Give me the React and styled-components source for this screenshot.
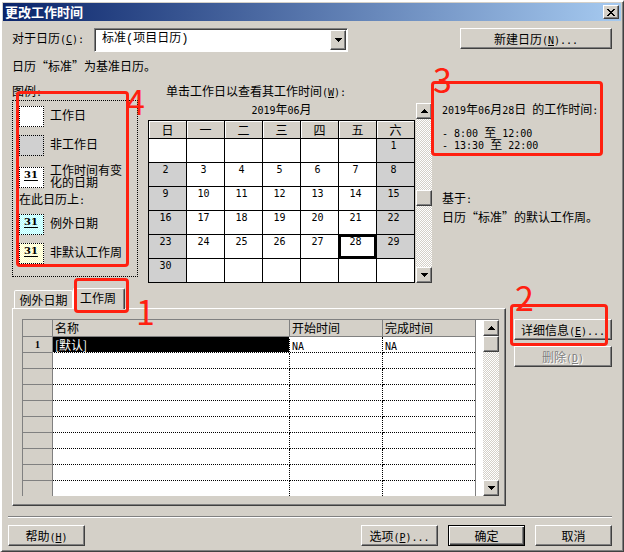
import React, { useState } from "react";
import styled, { createGlobalStyle, css } from "styled-components";

const FACE = "#d4d0c8";
const SHADE = "#808080";
const DARK = "#404040";
const RED = "#ff2010";
const CJK = '"Noto Sans CJK SC", sans-serif';

const Global = createGlobalStyle`
  *, *::before, *::after { box-sizing: border-box; }
  body { margin: 0; background: ${FACE}; }
  body, button, select, table {
    font-family: ${CJK};
    font-size: 12px;
    line-height: 16px;
    color: #000;
  }
  button { margin: 0; padding: 0; border: 0; border-radius: 0; }
  p { margin: 0; }
`;

const raised = css`
  background: ${FACE};
  border: 1px solid;
  border-color: #fff ${DARK} ${DARK} #fff;
  box-shadow: inset -1px -1px 0 ${SHADE};
`;

const Dialog = styled.main`
  min-height: 100vh;
  padding: 1px 2px 5px 1px;
  background: ${FACE};
  border: solid;
  border-width: 2px 1px 1px 2px;
  border-color: #fff ${DARK} ${DARK} #fff;
  box-shadow: inset -1px -1px 0 ${SHADE};
  white-space: nowrap;
`;

const TitleBar = styled.header`
  display: flex;
  align-items: center;
  justify-content: space-between;
  height: 18px;
  padding: 0 2px;
  background: linear-gradient(to right, #0a246a, #a6caf0);
`;

const Title = styled.h1`
  margin: 0;
  font-size: 13px;
  line-height: 18px;
  color: #fff;
`;

const CloseButton = styled.button`
  ${raised}
  display: flex;
  align-items: center;
  justify-content: center;
  width: 16px;
  height: 14px;
`;

const Content = styled.div`
  padding: 7px 9px 0;
`;

const Latin = styled.span`
  font-family: "DejaVu Sans Mono", monospace;
  font-size: 10px;
  line-height: 8px;
  white-space: pre;
`;

const PushButton = styled.button`
  ${raised}
  width: ${(p) => p.$width}px;
  height: 21px;
  line-height: 17px;
  text-align: center;
  &:disabled {
    color: ${SHADE};
    text-shadow: 1px 1px 0 #fff;
  }
  ${(p) =>
    p.$primary &&
    css`
      border-color: #000;
      box-shadow: inset 1px 1px 0 #fff, inset -1px -1px 0 ${DARK}, inset -2px -2px 0 ${SHADE};
    `}
`;

const CalendarChoice = styled.div`
  display: flex;
  align-items: flex-start;
  height: 24px;
  > button { margin-left: auto; }
`;

const ChoiceLabel = styled.label`
  flex: 0 0 82px;
  padding-top: 2px;
`;

const Combo = styled.div`
  display: grid;
  grid-template-columns: minmax(0, 1fr) 16px;
  flex: 0 1 254px;
  height: 24px;
  background: #fff;
  border: 1px solid;
  border-color: ${SHADE} #fff #fff ${SHADE};
  box-shadow: inset 1px 1px 0 ${DARK};
  padding: 1px;
`;

const ComboSelect = styled.select`
  grid-column: 1 / 3;
  grid-row: 1;
  appearance: none;
  min-width: 0;
  padding: 0 20px 3px 6px;
  background: transparent;
  border: 0;
  font-family: "Liberation Mono", ${CJK};
`;

const ComboArrow = styled.span`
  ${raised}
  grid-column: 2;
  grid-row: 1;
  display: flex;
  align-items: center;
  justify-content: center;
  pointer-events: none;
`;

const BaseNote = styled.p`
  margin-top: 6px;
`;

const Overview = styled.div`
  display: flex;
  margin-top: 9px;
`;

const LegendColumn = styled.section`
  position: relative;
  flex: 0 0 126px;
`;

const Legend = styled.div`
  display: flex;
  flex-direction: column;
  gap: 8px;
  margin-top: 1px;
  padding: 5px 6px 12px;
  border: 1px dotted #000;
`;

const LegendItem = styled.div`
  display: grid;
  grid-template-columns: 25px 1fr;
  align-items: center;
  column-gap: 6px;
  height: 21px;
  line-height: 12px;
  > :last-child { margin-bottom: 3px; }
`;

const LegendHeading = styled.div`
  height: 13px;
  line-height: 12px;
`;

const dither = (a, b) => `repeating-conic-gradient(${a} 0 25%, ${b} 0 50%) 0 0 / 2px 2px`;

const Swatch = styled.span`
  height: 21px;
  background: ${(p) => p.$fill};
  border: 1px dotted #000;
  padding-left: 4px;
  font: bold 10px/14px "DejaVu Serif", serif;
  text-decoration: underline;
  text-underline-offset: 2px;
`;

const CalendarColumn = styled.section`
  flex: 0 0 284px;
  margin-left: 10px;
`;

const CalendarLabel = styled.p`
  padding-left: 18px;
`;

const CalendarBody = styled.div`
  display: grid;
  grid-template-columns: minmax(0, 1fr) 16px;
  column-gap: 1px;
  margin-top: 4px;
`;

const Month = styled.div`
  height: 17px;
  line-height: 12px;
  text-align: center;
`;

const MonthTable = styled.table`
  width: 100%;
  table-layout: fixed;
  border-collapse: separate;
  border-spacing: 0;
  border: solid #000;
  border-width: 1px 0 0 1px;
`;

const Weekday = styled.th`
  height: 18px;
  padding: 0;
  border: solid #000;
  border-width: 0 1px 1px 0;
  box-shadow: inset 1px 1px 0 #fff;
  font-size: 12px;
  font-weight: normal;
  line-height: 16px;
`;

const DayCell = styled.td`
  height: 24px;
  padding: 0;
  border: solid #000;
  border-width: 0 1px 1px 0;
  background: ${(p) => (p.$off ? "#d0d0d0" : "#fff")};
`;

const Day = styled.button`
  display: block;
  width: 100%;
  height: 23px;
  padding: 0 4px 10px 0;
  background: transparent;
  font: 10px/13px "DejaVu Sans Mono", monospace;
  box-shadow: ${(p) => (p.$selected ? "inset 0 0 0 2px #000" : "none")};
`;

const ScrollTrack = styled.div`
  display: grid;
  grid-template-rows: 16px ${(p) => p.$before} 16px 1fr 16px;
  width: 16px;
  background: ${dither("#fff", FACE)};
`;

const ScrollButton = styled.button`
  ${raised}
  display: flex;
  align-items: center;
  justify-content: center;
  grid-row: ${(p) => p.$row};
`;

const Details = styled.aside`
  position: relative;
  flex: 1;
  margin-left: 10px;
  padding-top: 18px;
`;

const Hours = styled.div`
  margin: 9px 0 38px;
  line-height: 12px;
`;

const BasedOn = styled.p`
  line-height: 19px;
`;

const Lower = styled.div`
  display: flex;
  margin-top: 5px;
`;

const TabArea = styled.section`
  flex: 1;
  min-width: 0;
`;

const TabList = styled.div`
  position: relative;
  display: flex;
  align-items: flex-end;
  height: 20px;
  padding-left: 2px;
`;

const Tab = styled.button`
  height: ${(p) => (p.$active ? 21 : 18)}px;
  width: ${(p) => (p.$active ? 52 : 59)}px;
  margin-bottom: ${(p) => (p.$active ? -1 : 0)}px;
  padding-bottom: ${(p) => (p.$active ? 3 : 0)}px;
  z-index: ${(p) => (p.$active ? 1 : 0)};
  background: ${FACE};
  border: solid #fff;
  border-width: 1px 1px 0;
  border-radius: 2px 2px 0 0;
  ${(p) =>
    p.$active &&
    css`
      padding-right: 2px;
      border-right-color: ${DARK};
      box-shadow: inset -1px 0 0 ${SHADE};
    `}
`;

const Panel = styled.div`
  display: flex;
  padding: 10px 6px 9px 9px;
  border: 1px solid;
  border-color: #fff ${DARK} ${DARK} #fff;
  box-shadow: inset -1px -1px 0 ${SHADE};
`;

const GridFrame = styled.div`
  display: flex;
  flex: 1;
  min-width: 0;
  background: #fff;
  border-top: 1px solid ${SHADE};
`;

const WeekTable = styled.table`
  flex: 1;
  min-width: 0;
  margin-right: 7px;
  table-layout: fixed;
  border-collapse: separate;
  border-spacing: 0;
  border: solid ${SHADE};
  border-width: 0 1px 0 1px;
`;

const Column = styled.col`
  width: ${(p) => p.$width};
`;

const Head = styled.th`
  height: 17px;
  padding: 0 0 0 2px;
  background: ${FACE};
  border: solid ${SHADE};
  border-width: 0 1px 1px 0;
  font-weight: normal;
  line-height: 16px;
  text-align: left;
  &:last-child { border-right: 0; }
`;

const RowHead = styled.th`
  height: 16px;
  padding: 0;
  background: ${FACE};
  border: solid ${SHADE};
  border-width: 0 1px 1px 0;
  font: bold 10px/14px "Liberation Serif", serif;
  tr:last-child > & { height: 15px; border-bottom: 0; }
`;

const Cell = styled.td`
  height: 16px;
  padding: 0 0 0 2px;
  border: dotted #000;
  border-width: 0 1px 1px 0;
  line-height: 14px;
  &:last-child { border-right: 0; }
  tr:last-child > & { height: 15px; border-bottom: 0; }
  ${(p) =>
    p.$selected &&
    css`
      background: #000;
      color: #fff;
      border-color: #fff;
    `}
`;

const SideButtons = styled.div`
  position: relative;
  display: flex;
  flex-direction: column;
  gap: 6px;
  margin-left: 8px;
  padding-top: 31px;
`;

const Footer = styled.footer`
  display: flex;
  gap: 10px;
  margin: 10px 0 0 -4px;
  padding-top: 8px;
  border-top: 1px solid ${SHADE};
  box-shadow: inset 0 1px 0 #fff;
  > :first-child { margin-right: auto; }
`;

/* Red callouts lie over the dialog and are anchored to the part they mark. */
const Callout = styled.div`
  position: absolute;
  z-index: 2;
  top: ${(p) => p.$top}px;
  left: ${(p) => p.$left}px;
  width: ${(p) => p.$width}px;
  height: ${(p) => p.$height}px;
  border: 3px solid ${RED};
  border-radius: 4px;
  pointer-events: none;
`;

const CalloutNumber = styled.span`
  position: absolute;
  top: ${(p) => p.$top}px;
  left: ${(p) => p.$left}px;
  font-size: 34px;
  line-height: 34px;
  color: ${RED};
`;

function Marker({ n, top, left, width, height, numberTop, numberLeft }) {
  return (
    <Callout $top={top} $left={left} $width={width} $height={height}>
      <CalloutNumber $top={numberTop} $left={numberLeft}>{n}</CalloutNumber>
    </Callout>
  );
}

function Arrow({ up }) {
  return (
    <svg width="7" height="4" viewBox="0 0 7 4" shapeRendering="crispEdges" aria-hidden="true">
      <path d={up ? "M3 0h1v1h1v1h1v1h1v1H0V3h1V2h1V1h1z" : "M0 0h7v1H6v1H5v1H4v1H3V3H2V2H1V1H0z"} />
    </svg>
  );
}

function Scrollbar({ before }) {
  return (
    <ScrollTrack $before={before}>
      <ScrollButton $row={1} aria-label="向上滚动"><Arrow up /></ScrollButton>
      <ScrollButton $row={3} aria-label="滚动块" />
      <ScrollButton $row={5} aria-label="向下滚动"><Arrow /></ScrollButton>
    </ScrollTrack>
  );
}

function Key({ letter, tail = "" }) {
  return <Latin>(<u>{letter}</u>){tail}</Latin>;
}

const weekdays = ["日", "一", "二", "三", "四", "五", "六"];
const weeks = Array.from({ length: 6 }, (_, w) =>
  Array.from({ length: 7 }, (_, d) => {
    const n = w * 7 + d - 5;
    return n >= 1 && n <= 30 ? n : null;
  })
);
const rows = Array.from({ length: 10 }, (_, i) => (i === 0 ? ["[默认]", "NA", "NA"] : ["", "", ""]));

export default function App() {
  const [day, setDay] = useState(28);
  return (
    <>
      <Global />
      <Dialog lang="zh-CN">
        <TitleBar>
          <Title>更改工作时间</Title>
          <CloseButton aria-label="关闭">
            <svg width="8" height="7" viewBox="0 0 8 7" shapeRendering="crispEdges" aria-hidden="true">
              <path d="M0 0h2v1h1v1h2V1h1V0h2v1H7v1H6v1H5v1h1v1h1v1h1v1H6V6H5V5H3v1H2v1H0V6h1V5h1V4h1V3H2V2H1V1H0z" />
            </svg>
          </CloseButton>
        </TitleBar>

        <Content>
          <CalendarChoice>
            <ChoiceLabel htmlFor="calendar">对于日历<Key letter="C" tail=":" /></ChoiceLabel>
            <Combo>
              <ComboSelect id="calendar" defaultValue="standard">
                <option value="standard">标准(项目日历)</option>
              </ComboSelect>
              <ComboArrow><Arrow /></ComboArrow>
            </Combo>
            <PushButton $width={152}>新建日历<Key letter="N" tail="..." /></PushButton>
          </CalendarChoice>

          <BaseNote>日历“标准”为基准日历。</BaseNote>

          <Overview>
            <LegendColumn>
              <p>图例<Latin>:</Latin></p>
              <Legend>
                <LegendItem><Swatch $fill="#fff" /><span>工作日</span></LegendItem>
                <LegendItem><Swatch $fill="#d0d0d0" /><span>非工作日</span></LegendItem>
                <LegendItem><Swatch $fill="#fff">31</Swatch><span>工作时间有变<br />化的日期</span></LegendItem>
                <LegendHeading>在此日历上<Latin>:</Latin></LegendHeading>
                <LegendItem><Swatch $fill={dither("#e4ffff", "#b4ffff")}>31</Swatch><span>例外日期</span></LegendItem>
                <LegendItem><Swatch $fill={dither("#fffff0", "#ffffc4")}>31</Swatch><span>非默认工作周</span></LegendItem>
              </Legend>
              <Marker n="4" top={8} left={4} width={113} height={176} numberTop={-10} numberLeft={107} />
            </LegendColumn>

            <CalendarColumn>
              <CalendarLabel>单击工作日以查看其工作时间<Key letter="W" tail=":" /></CalendarLabel>
              <CalendarBody>
                <div>
                  <Month><Latin>2019</Latin>年<Latin>06</Latin>月</Month>
                  <MonthTable>
                    <thead>
                      <tr>{weekdays.map((d) => <Weekday key={d} scope="col">{d}</Weekday>)}</tr>
                    </thead>
                    <tbody>
                      {weeks.map((week, w) => (
                        <tr key={w}>
                          {week.map((n, d) => (
                            <DayCell key={d} $off={n && (d === 0 || d === 6)}>
                              {n && <Day $selected={n === day} onClick={() => setDay(n)}>{n}</Day>}
                            </DayCell>
                          ))}
                        </tr>
                      ))}
                    </tbody>
                  </MonthTable>
                </div>
                <Scrollbar before="71px" />
              </CalendarBody>
            </CalendarColumn>

            <Details>
              <p><Latin>2019</Latin>年<Latin>06</Latin>月<Latin>{String(day).padStart(2, "0")}</Latin>日<Latin> </Latin>的工作时间<Latin>:</Latin></p>
              <Hours>
                <div><Latin>- 8:00 </Latin>至<Latin> 12:00</Latin></div>
                <div><Latin>- 13:30 </Latin>至<Latin> 22:00</Latin></div>
              </Hours>
              <BasedOn>基于<Latin>:</Latin></BasedOn>
              <BasedOn>日历“标准”的默认工作周。</BasedOn>
              <Marker n="3" top={-2} left={-11} width={172} height={75} numberTop={-22} numberLeft={-1} />
            </Details>
          </Overview>

          <Lower>
            <TabArea>
              <TabList role="tablist">
                <Tab role="tab" aria-selected="false">例外日期</Tab>
                <Tab role="tab" aria-selected="true" $active>工作周</Tab>
                <Marker n="1" top={-10} left={62} width={55} height={35} numberTop={13} numberLeft={59} />
              </TabList>
              <Panel role="tabpanel">
                <GridFrame>
                  <WeekTable>
                    <colgroup>
                      <Column $width="30px" />
                      <Column $width="auto" />
                      <Column $width="93px" />
                      <Column $width="92px" />
                    </colgroup>
                    <thead>
                      <tr>
                        <Head aria-label="行号" />
                        <Head scope="col">名称</Head>
                        <Head scope="col">开始时间</Head>
                        <Head scope="col">完成时间</Head>
                      </tr>
                    </thead>
                    <tbody>
                      {rows.map(([name, start, end], i) => (
                        <tr key={i}>
                          <RowHead scope="row">{name ? i + 1 : ""}</RowHead>
                          <Cell $selected={i === 0}>{name}</Cell>
                          <Cell><Latin>{start}</Latin></Cell>
                          <Cell><Latin>{end}</Latin></Cell>
                        </tr>
                      ))}
                    </tbody>
                  </WeekTable>
                  <Scrollbar before="0px" />
                </GridFrame>
              </Panel>
            </TabArea>
            <SideButtons>
              <PushButton $width={98}>详细信息<Key letter="E" tail="..." /></PushButton>
              <PushButton $width={98} disabled>删除<Key letter="D" /></PushButton>
              <Marker n="2" top={16} left={-4} width={98} height={42} numberTop={-27} numberLeft={2} />
            </SideButtons>
          </Lower>

          <Footer>
            <PushButton $width={77}>帮助<Key letter="H" /></PushButton>
            <PushButton $width={77}>选项<Key letter="P" tail="..." /></PushButton>
            <PushButton $width={77} $primary>确定</PushButton>
            <PushButton $width={77}>取消</PushButton>
          </Footer>
        </Content>
      </Dialog>
    </>
  );
}
